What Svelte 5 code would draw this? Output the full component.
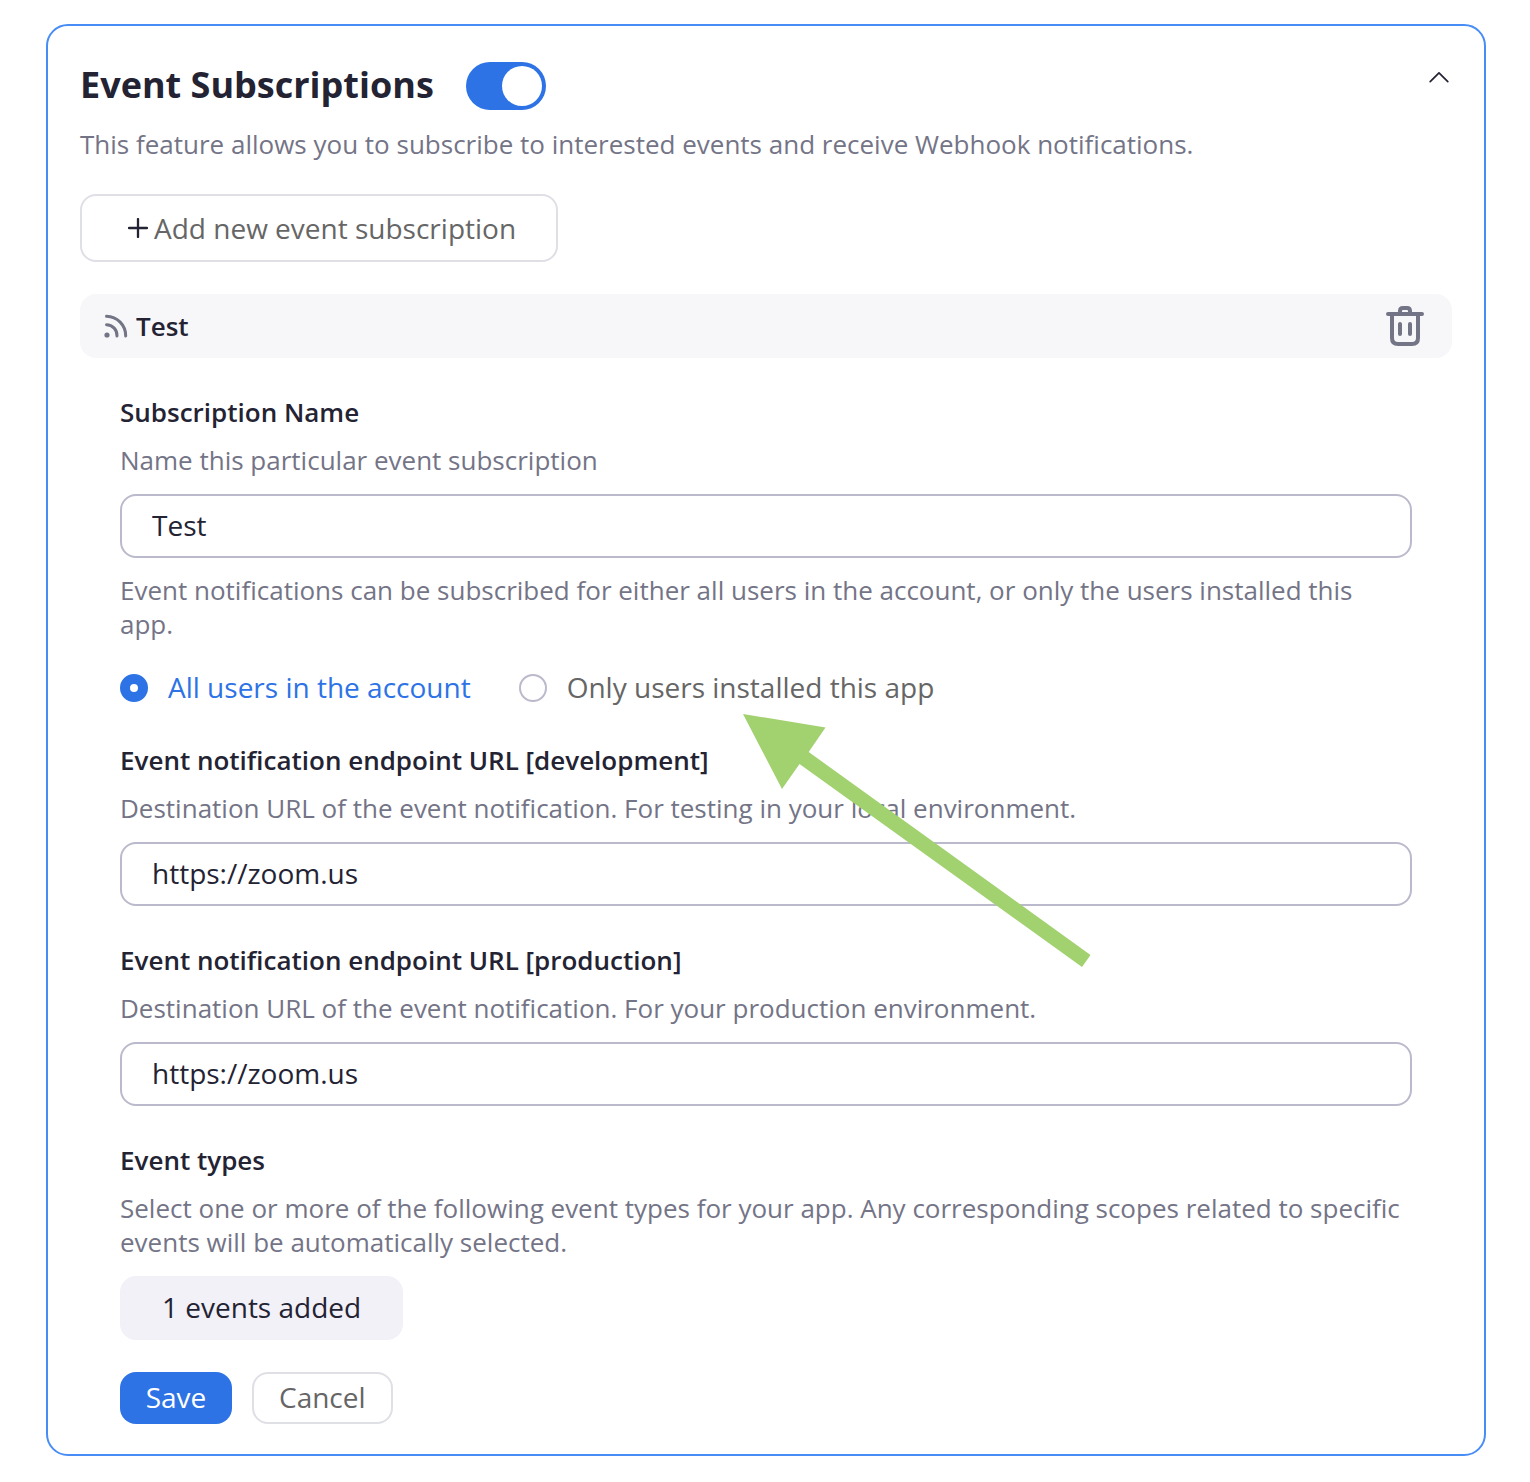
<script lang="ts">
  interface Endpoint {
    id: string;
    env: string;
    hint: string;
    url: string;
  }

  let enabled = $state(true);
  let expanded = $state(true);
  let name = $state('Test');
  let audience = $state('all');
  let eventCount = $state(1);

  let endpoints = $state<Endpoint[]>([
    {
      id: 'dev-url',
      env: 'development',
      hint: 'For testing in your local environment.',
      url: 'https://zoom.us'
    },
    {
      id: 'prod-url',
      env: 'production',
      hint: 'For your production environment.',
      url: 'https://zoom.us'
    }
  ]);

  const audiences = [
    { value: 'all', label: 'All users in the account' },
    { value: 'installed', label: 'Only users installed this app' }
  ];
</script>

<main class="page">
  <section class="card">
    <header class="card-header">
      <h1>Event Subscriptions</h1>
      <input
        class="toggle"
        type="checkbox"
        role="switch"
        aria-label="Event Subscriptions"
        bind:checked={enabled}
      />
      <button
        class="icon-btn collapse"
        aria-label="Collapse"
        aria-expanded={expanded}
        onclick={() => (expanded = !expanded)}
      >
        <svg width="24" height="24" viewBox="0 0 24 24" fill="none" stroke="currentColor" stroke-width="1.7" stroke-linecap="round" stroke-linejoin="round">
          <path d="M2.2 19.6 L11 10.8 L19.8 19.6" />
        </svg>
      </button>
    </header>

    <p class="desc">
      This feature allows you to subscribe to interested events and receive Webhook notifications.
    </p>

    {#if expanded}
      <button class="btn add-btn">
        <svg width="20" height="20" viewBox="0 0 20 20" fill="none" stroke="#232333" stroke-width="2.3" stroke-linecap="round">
          <path d="M10 1V19M1 10H19" />
        </svg>
        Add new event subscription
      </button>

      <div class="sub-bar">
        <svg width="24" height="24" viewBox="0 0 24 24" fill="none" stroke="currentColor" stroke-width="3" stroke-linecap="round">
          <circle cx="3" cy="21" r="2.6" fill="currentColor" stroke="none" />
          <path d="M2.5 10.8A10.5 10.5 0 0 1 13 22" />
          <path d="M2.5 2.2A19.5 19.5 0 0 1 21.7 22" />
        </svg>
        <h2>{name}</h2>
        <button class="icon-btn" aria-label="Delete subscription">
          <svg width="38" height="40" viewBox="0 0 38 40" fill="none" stroke="currentColor" stroke-width="4" stroke-linecap="round">
            <path d="M2 8H36" />
            <path d="M14 7V5Q14 2 17 2H21Q24 2 24 5V7" />
            <path d="M6 9V32Q6 38 12 38H26Q32 38 32 32V9" />
            <path d="M14 18V28M24 18V28" />
          </svg>
        </button>
      </div>

      <form class="sub-form" onsubmit={(e) => e.preventDefault()}>
        <div class="field">
          <label class="label" for="sub-name">Subscription Name</label>
          <p class="desc">Name this particular event subscription</p>
          <input id="sub-name" class="text-input" type="text" bind:value={name} />
          <p class="desc help">
            Event notifications can be subscribed for either all users in the account, or only the
            users installed this app.
          </p>
          <div class="radios" role="radiogroup" aria-label="Subscribed users">
            {#each audiences as option (option.value)}
              <label class="radio" class:selected={audience === option.value}>
                <input type="radio" name="audience" value={option.value} bind:group={audience} />
                <span>{option.label}</span>
              </label>
            {/each}
            <!-- Annotation arrow pointing at the second option -->
            <svg class="arrow" width="348" height="254" viewBox="0 0 348 254" aria-hidden="true">
              <path d="M0 0 L82.5 13.5 L65.7 38 L347.5 241 L339 253 L56.5 50 L39 75 Z" fill="#a2d16f" />
            </svg>
          </div>
        </div>

        {#each endpoints as endpoint (endpoint.id)}
          <div class="field">
            <label class="label" for={endpoint.id}>
              Event notification endpoint URL [{endpoint.env}]
            </label>
            <p class="desc">Destination URL of the event notification. {endpoint.hint}</p>
            <input id={endpoint.id} class="text-input" type="text" bind:value={endpoint.url} />
          </div>
        {/each}

        <div class="field">
          <h3 class="label">Event types</h3>
          <p class="desc">
            Select one or more of the following event types for your app. Any corresponding scopes
            related to specific events will be automatically selected.
          </p>
          <button type="button" class="btn events-btn">{eventCount} events added</button>
        </div>

        <div class="actions">
          <button type="submit" class="btn primary">Save</button>
          <button type="button" class="btn">Cancel</button>
        </div>
      </form>
    {/if}
  </section>
</main>

<style>
  :global(body) {
    margin: 0;
    background: #fff;
  }

  .page {
    padding: 24px 44px 26px 46px;
    color: #232333;
    font-family: 'Open Sans', 'Noto Sans', sans-serif;
    font-size: 28px;
  }

  .page :is(h1, h2, h3, p) {
    margin: 0;
  }

  .page :is(button, input) {
    font: inherit;
    box-sizing: border-box;
  }

  .card {
    padding: 36px 32px 30px;
    border: 2px solid #478df5;
    border-radius: 22px;
  }

  .card-header {
    display: flex;
    align-items: center;
    gap: 32px;
    margin-bottom: 17px;
  }

  h1 {
    padding-bottom: 2px;
    font-size: 36px;
    font-weight: 700;
    line-height: 46px;
  }

  .toggle {
    appearance: none;
    width: 80px;
    height: 48px;
    margin: 0;
    padding: 4px;
    border-radius: 24px;
    background: #babacc;
    display: flex;
    cursor: pointer;
  }

  .toggle::before {
    content: '';
    width: 40px;
    height: 40px;
    border-radius: 50%;
    background: #fff;
  }

  .toggle:checked {
    background: #2d73e5;
    justify-content: flex-end;
  }

  .icon-btn {
    margin-left: auto;
    padding: 0;
    border: none;
    background: none;
    color: #747487;
    display: flex;
    cursor: pointer;
  }

  .collapse {
    align-self: flex-start;
    color: #232333;
  }

  .desc {
    color: #747487;
    font-size: 26px;
    line-height: 34px;
  }

  .btn {
    height: 52px;
    padding: 0 25px 2px;
    border: 2px solid #dfdfe6;
    border-radius: 16px;
    background: #fff;
    color: #666;
    cursor: pointer;
  }

  .add-btn {
    display: flex;
    align-items: center;
    gap: 6px;
    height: 68px;
    margin-top: 33px;
    padding: 0 40px 0 46px;
    line-height: 36px;
  }

  .sub-bar {
    display: flex;
    align-items: center;
    gap: 8px;
    height: 64px;
    margin-top: 32px;
    padding: 0 28px 0 24px;
    border-radius: 16px;
    background: #f7f7fa;
    color: #747487;
    box-sizing: border-box;
  }

  h2 {
    color: #232333;
    font-size: 26px;
    font-weight: 600;
  }

  .sub-form {
    padding: 37px 40px 0;
  }

  .field + .field {
    margin-top: 37px;
  }

  .page .label {
    display: block;
    margin-bottom: 14px;
    font-size: 26px;
    font-weight: 600;
    line-height: 34px;
  }

  .text-input {
    display: block;
    width: 100%;
    height: 64px;
    margin-top: 17px;
    padding: 0 30px 2px;
    border: 2px solid #babacc;
    border-radius: 16px;
    background: #fff;
    color: #232333;
  }

  .help {
    padding-top: 15px;
  }

  .radios {
    position: relative;
    display: flex;
    gap: 48px;
    margin-top: 29px;
    line-height: 36px;
  }

  .radio {
    display: flex;
    align-items: center;
    gap: 20px;
    color: #666;
    cursor: pointer;
  }

  .radio span {
    padding-bottom: 2px;
    line-height: 34px;
  }

  .radio.selected {
    color: #2d73e5;
  }

  .radio input {
    appearance: none;
    width: 28px;
    height: 28px;
    margin: 0;
    border: 2px solid #babacc;
    border-radius: 50%;
    background: #fff;
  }

  .radio input:checked {
    border: 10px solid #2d73e5;
  }

  .arrow {
    position: absolute;
    top: 44px;
    left: 623px;
    pointer-events: none;
  }

  .events-btn {
    height: 64px;
    margin-top: 17px;
    padding: 0 42px 2px;
    border: none;
    background: #f2f1f7;
    color: #232333;
  }

  .actions {
    display: flex;
    gap: 20px;
    margin-top: 32px;
  }

  .primary {
    min-width: 112px;
    padding: 0 24px 2px;
    border: none;
    background: #2d73e5;
    color: #fff;
  }
</style>
